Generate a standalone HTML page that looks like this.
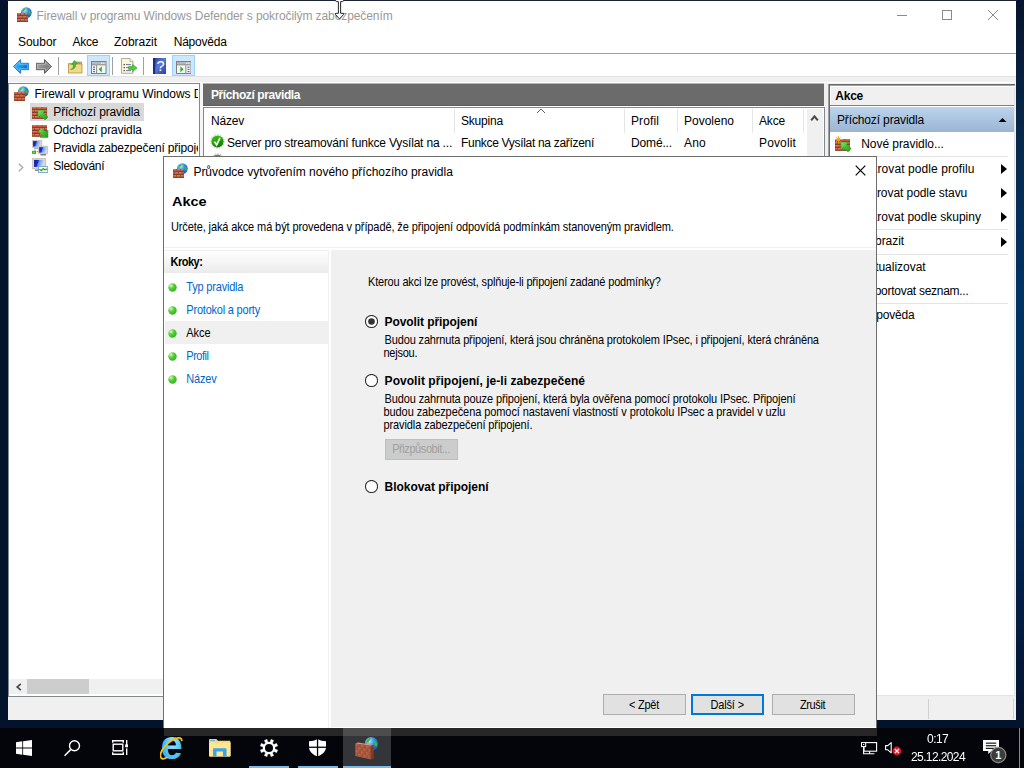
<!DOCTYPE html>
<html lang="cs"><head><meta charset="utf-8"><title>Firewall v programu Windows Defender s pokročilým zabezpečením</title>
<style>
html,body{margin:0;padding:0;}
body{width:1024px;height:768px;overflow:hidden;position:relative;background:#03122c;font-family:"Liberation Sans",sans-serif;}
.r{position:absolute;box-sizing:border-box;display:block;}
.t{position:absolute;white-space:nowrap;display:block;}
</style></head><body>
<div class="r" style="left:0px;top:0px;width:1024px;height:768px;background:#04132c;"></div>
<div class="r" style="left:1016px;top:0px;width:8px;height:728px;background:linear-gradient(to bottom,#06142e 0%,#072444 14%,#082a50 22%,#003366 41%,#013060 60%,#03204a 80%,#04142f 98%);"></div>
<div class="r" style="left:8px;top:1px;width:1008px;height:719px;background:#ffffff;"></div>
<div class="r" style="left:7px;top:0px;width:1010px;height:1px;background:#1b2433;"></div>
<span class="t" style="left:36.60px;top:10.24px;font-size:12px;line-height:12px;color:#999999;letter-spacing:-0.088px;">Firewall v programu Windows Defender s pokročilým zabezpečením</span>
<svg class="r" style="left:334px;top:0px;" width="12" height="20" viewBox="0 0 12 20"><path d="M1.6 -1H9.4V0.5Q9.4 1.6 8.4 1.6H6.6V13.3H8.9Q10.5 13.3 9.6 14.4L5.5 19L1.4 14.4Q0.5 13.3 2.1 13.3H4.4V1.6H2.6Q1.6 1.6 1.6 0.5Z" fill="#fff" stroke="#23232b" stroke-width="1"/></svg>
<div class="r" style="left:897px;top:15px;width:10px;height:1px;background:#8a8a8a;"></div>
<div class="r" style="left:942px;top:10px;width:10px;height:10px;border:1px solid #8a8a8a;"></div>
<svg class="r" style="left:988px;top:10px;" width="10" height="10" viewBox="0 0 10 10"><path d="M0 0L10 10M10 0L0 10" stroke="#8a8a8a" stroke-width="1" fill="none"/></svg>
<span class="t" style="left:18.00px;top:35.84px;font-size:12px;line-height:12px;color:#000;letter-spacing:-0.032px;">Soubor</span>
<span class="t" style="left:72.40px;top:35.84px;font-size:12px;line-height:12px;color:#000;letter-spacing:-0.219px;">Akce</span>
<span class="t" style="left:114.00px;top:35.84px;font-size:12px;line-height:12px;color:#000;letter-spacing:-0.043px;">Zobrazit</span>
<span class="t" style="left:173.70px;top:35.84px;font-size:12px;line-height:12px;color:#000;letter-spacing:-0.213px;">Nápověda</span>
<div class="r" style="left:8px;top:53px;width:1008px;height:1px;background:#a0a0a0;"></div>
<div class="r" style="left:8px;top:77px;width:1008px;height:7px;background:#f0f0f0;"></div>
<div class="r" style="left:8px;top:76px;width:1008px;height:1px;background:#e3e3e3;"></div>
<div class="r" style="left:87px;top:55px;width:23px;height:21px;background:#cce8ff;border:1px solid #99d1ff;"></div>
<div class="r" style="left:172px;top:55px;width:23px;height:21px;background:#cce8ff;border:1px solid #99d1ff;"></div>
<div class="r" style="left:58px;top:57px;width:1px;height:18px;background:#a0a0a0;"></div>
<div class="r" style="left:112px;top:57px;width:1px;height:18px;background:#a0a0a0;"></div>
<div class="r" style="left:143px;top:57px;width:1px;height:18px;background:#a0a0a0;"></div>
<div class="r" style="left:8px;top:84px;width:1008px;height:636px;background:#f0f0f0;"></div>
<div class="r" style="left:8px;top:83px;width:192px;height:614px;background:#ffffff;border:1px solid #828790;"></div>
<div class="r" style="left:8px;top:82px;width:1008px;height:1px;background:#ffffff;"></div>
<div class="r" style="left:30px;top:103px;width:114px;height:18px;background:#d9d9d9;"></div>
<span class="t" style="left:34.40px;top:87.84px;font-size:12px;line-height:12px;color:#000;letter-spacing:-0.047px;width:163.5px;overflow:hidden;">Firewall v programu Windows Defender</span>
<span class="t" style="left:53.30px;top:105.84px;font-size:12px;line-height:12px;color:#000;letter-spacing:-0.169px;">Příchozí pravidla</span>
<span class="t" style="left:53.30px;top:123.84px;font-size:12px;line-height:12px;color:#000;letter-spacing:-0.096px;">Odchozí pravidla</span>
<span class="t" style="left:53.30px;top:141.84px;font-size:12px;line-height:12px;color:#000;letter-spacing:-0.175px;width:144.5px;overflow:hidden;">Pravidla zabezpečení připojení</span>
<span class="t" style="left:53.30px;top:159.84px;font-size:12px;line-height:12px;color:#000;letter-spacing:-0.263px;">Sledování</span>
<div class="r" style="left:9px;top:679px;width:190px;height:15px;background:#f0f0f0;"></div>
<div class="r" style="left:27px;top:679px;width:62px;height:15px;background:#cdcdcd;"></div>
<svg class="r" style="left:14.5px;top:682.5px;" width="7" height="8" viewBox="0 0 7 8"><path d="M5.8 0.8L2.2 4L5.8 7.2" stroke="#505050" stroke-width="1.8" fill="none"/></svg>
<div class="r" style="left:200px;top:83px;width:4px;height:614px;background:#f6f6f6;"></div>
<div class="r" style="left:203px;top:83px;width:621px;height:1px;background:#b4b4b4;"></div>
<div class="r" style="left:203px;top:84px;width:621px;height:22px;background:#6b6b6b;"></div>
<div class="r" style="left:203px;top:105px;width:621px;height:1px;background:#5e5e5e;"></div>
<div class="r" style="left:203px;top:106px;width:621px;height:1px;background:#ffffff;"></div>
<span class="t" style="left:211.00px;top:88.84px;font-size:12px;line-height:12px;color:#ffffff;letter-spacing:-0.413px;font-weight:bold;">Příchozí pravidla</span>
<div class="r" style="left:203px;top:107px;width:622px;height:590px;background:#ffffff;border:1px solid #828790;"></div>
<div class="r" style="left:807px;top:109px;width:16px;height:587px;background:#f0f0f0;"></div>
<div class="r" style="left:803px;top:109px;width:1px;height:24px;background:#e5e5e5;"></div>
<div class="r" style="left:454px;top:109px;width:1px;height:24px;background:#e5e5e5;"></div>
<div class="r" style="left:624px;top:109px;width:1px;height:24px;background:#e5e5e5;"></div>
<div class="r" style="left:677px;top:109px;width:1px;height:24px;background:#e5e5e5;"></div>
<div class="r" style="left:752px;top:109px;width:1px;height:24px;background:#e5e5e5;"></div>
<span class="t" style="left:211.00px;top:114.84px;font-size:12px;line-height:12px;color:#000;letter-spacing:-0.203px;">Název</span>
<span class="t" style="left:461.00px;top:114.84px;font-size:12px;line-height:12px;color:#000;letter-spacing:-0.195px;">Skupina</span>
<span class="t" style="left:631.00px;top:114.84px;font-size:12px;line-height:12px;color:#000;letter-spacing:0.110px;">Profil</span>
<span class="t" style="left:684.00px;top:114.84px;font-size:12px;line-height:12px;color:#000;letter-spacing:-0.005px;">Povoleno</span>
<span class="t" style="left:759.00px;top:114.84px;font-size:12px;line-height:12px;color:#000;letter-spacing:-0.169px;">Akce</span>
<span class="t" style="left:227.00px;top:136.84px;font-size:12px;line-height:12px;color:#000;letter-spacing:-0.181px;">Server pro streamování funkce Vysílat na ...</span>
<span class="t" style="left:461.00px;top:136.84px;font-size:12px;line-height:12px;color:#000;letter-spacing:-0.306px;">Funkce Vysílat na zařízení</span>
<span class="t" style="left:631.00px;top:136.84px;font-size:12px;line-height:12px;color:#000;letter-spacing:-0.144px;">Domé...</span>
<span class="t" style="left:684.00px;top:136.84px;font-size:12px;line-height:12px;color:#000;letter-spacing:0.216px;">Ano</span>
<span class="t" style="left:759.00px;top:136.84px;font-size:12px;line-height:12px;color:#000;letter-spacing:0.140px;">Povolit</span>
<svg class="r" style="left:536px;top:108px;" width="10" height="6" viewBox="0 0 10 6"><path d="M1 5L5 1L9 5" stroke="#606060" stroke-width="1" fill="none"/></svg>
<svg class="r" style="left:810px;top:114px;" width="9" height="8" viewBox="0 0 9 8"><path d="M1.2 6.4L4.5 2.3L7.8 6.4" stroke="#4a4a4a" stroke-width="2.1" fill="none"/></svg>
<div class="r" style="left:828px;top:84px;width:187px;height:612px;background:#ffffff;border-left:2px solid #a0a0a0;border-top:2px solid #a0a0a0;"></div>
<div class="r" style="left:829px;top:84px;width:186px;height:1px;background:#696969;"></div>
<div class="r" style="left:829px;top:84px;width:1px;height:612px;background:#696969;"></div>
<div class="r" style="left:830px;top:86px;width:185px;height:1px;background:#ffffff;"></div>
<div class="r" style="left:831px;top:87px;width:184px;height:18px;background:#f0f0f0;"></div>
<span class="t" style="left:835.30px;top:89.84px;font-size:12px;line-height:12px;color:#000;letter-spacing:-0.246px;font-weight:bold;">Akce</span>
<div class="r" style="left:830px;top:105px;width:185px;height:1px;background:#808080;"></div>
<div class="r" style="left:830px;top:106px;width:185px;height:1px;background:#ffffff;"></div>
<div class="r" style="left:830px;top:107px;width:185px;height:25px;background:linear-gradient(#bcd4ec,#9ab5d3);"></div>
<span class="t" style="left:837.00px;top:113.84px;font-size:12px;line-height:12px;color:#000;letter-spacing:-0.139px;">Příchozí pravidla</span>
<svg class="r" style="left:998px;top:117.6px;" width="9" height="4.6" viewBox="0 0 9 4.6"><path d="M0 4.6L4.5 0L9 4.6Z" fill="#000"/></svg>
<span class="t" style="left:861.20px;top:137.84px;font-size:12px;line-height:12px;color:#000;letter-spacing:-0.048px;">Nové pravidlo...</span>
<div class="r" style="left:834px;top:156px;width:174px;height:1px;background:#e3e3e3;"></div>
<span class="t" style="left:861.20px;top:162.84px;font-size:12px;line-height:12px;color:#000;letter-spacing:0.084px;">Filtrovat podle profilu</span>
<span class="t" style="left:861.20px;top:186.84px;font-size:12px;line-height:12px;color:#000;letter-spacing:-0.066px;">Filtrovat podle stavu</span>
<span class="t" style="left:861.20px;top:210.84px;font-size:12px;line-height:12px;color:#000;letter-spacing:0.018px;">Filtrovat podle skupiny</span>
<div class="r" style="left:834px;top:229px;width:174px;height:1px;background:#e3e3e3;"></div>
<span class="t" style="left:861.20px;top:235.24px;font-size:12px;line-height:12px;color:#000;letter-spacing:-0.068px;">Zobrazit</span>
<div class="r" style="left:834px;top:254px;width:174px;height:1px;background:#e3e3e3;"></div>
<span class="t" style="left:861.20px;top:260.84px;font-size:12px;line-height:12px;color:#000;letter-spacing:-0.025px;">Aktualizovat</span>
<span class="t" style="left:861.20px;top:285.34px;font-size:12px;line-height:12px;color:#000;letter-spacing:-0.271px;">Exportovat seznam...</span>
<div class="r" style="left:834px;top:303px;width:174px;height:1px;background:#e3e3e3;"></div>
<span class="t" style="left:861.20px;top:309.44px;font-size:12px;line-height:12px;color:#000;letter-spacing:-0.163px;">Nápověda</span>
<svg class="r" style="left:1001px;top:164px;" width="6" height="10" viewBox="0 0 6 10"><path d="M0 0L6 5L0 10Z" fill="#000"/></svg>
<svg class="r" style="left:1001px;top:188px;" width="6" height="10" viewBox="0 0 6 10"><path d="M0 0L6 5L0 10Z" fill="#000"/></svg>
<svg class="r" style="left:1001px;top:212px;" width="6" height="10" viewBox="0 0 6 10"><path d="M0 0L6 5L0 10Z" fill="#000"/></svg>
<svg class="r" style="left:1001px;top:236.5px;" width="6" height="10" viewBox="0 0 6 10"><path d="M0 0L6 5L0 10Z" fill="#000"/></svg>
<div class="r" style="left:1014px;top:87px;width:1px;height:609px;background:#e3e3e3;"></div>
<div class="r" style="left:830px;top:695px;width:185px;height:1px;background:#e3e3e3;"></div>
<div class="r" style="left:8px;top:697px;width:1008px;height:23px;background:#f0f0f0;"></div>
<div class="r" style="left:928px;top:699px;width:1px;height:20px;background:#d0d0d0;"></div>
<div class="r" style="left:1013px;top:699px;width:1px;height:20px;background:#d0d0d0;"></div>
<svg class="r" style="left:17px;top:7px;" width="16" height="16" viewBox="0 0 16 16"><defs><radialGradient id="i1" cx="35%" cy="30%" r="80%"><stop offset="0" stop-color="#bfe6ff"/><stop offset="0.45" stop-color="#2f8fe8"/><stop offset="1" stop-color="#1450b0"/></radialGradient></defs><circle cx="9.3" cy="5.6" r="5.4" fill="url(#i1)"/><path d="M5.25 4.25 q0.54 -2.97 3.24 -3.51 q0.27 1.89 -1.08 2.7 q-0.54 1.62 -2.16 0.81z" fill="#3cc028"/><path d="M11.73 2.9 q2.7 1.62 1.89 4.86 q-2.7 -1.08 -1.89 -4.86z" fill="#3cc028"/><defs><linearGradient id="i2" x1="0" y1="0" x2="0" y2="1"><stop offset="0" stop-color="#f09a78"/><stop offset="0.35" stop-color="#d9623d"/><stop offset="0.8" stop-color="#b8482a"/><stop offset="1" stop-color="#8a3018"/></linearGradient></defs><rect x="0" y="6" width="11" height="9" fill="#7c4438"/><rect x="0.30" y="6.25" width="3.07" height="2.50" fill="url(#i2)"/><rect x="3.97" y="6.25" width="3.07" height="2.50" fill="url(#i2)"/><rect x="7.64" y="6.25" width="3.06" height="2.50" fill="url(#i2)"/><rect x="0.30" y="9.25" width="1.23" height="2.50" fill="url(#i2)"/><rect x="2.13" y="9.25" width="3.07" height="2.50" fill="url(#i2)"/><rect x="5.80" y="9.25" width="3.07" height="2.50" fill="url(#i2)"/><rect x="9.48" y="9.25" width="1.22" height="2.50" fill="url(#i2)"/><rect x="0.30" y="12.25" width="3.07" height="2.50" fill="url(#i2)"/><rect x="3.97" y="12.25" width="3.07" height="2.50" fill="url(#i2)"/><rect x="7.64" y="12.25" width="3.06" height="2.50" fill="url(#i2)"/></svg>
<svg class="r" style="left:14px;top:86px;" width="16" height="16" viewBox="0 0 16 16"><defs><radialGradient id="i3" cx="35%" cy="30%" r="80%"><stop offset="0" stop-color="#bfe6ff"/><stop offset="0.45" stop-color="#2f8fe8"/><stop offset="1" stop-color="#1450b0"/></radialGradient></defs><circle cx="9.3" cy="5.6" r="5.4" fill="url(#i3)"/><path d="M5.25 4.25 q0.54 -2.97 3.24 -3.51 q0.27 1.89 -1.08 2.7 q-0.54 1.62 -2.16 0.81z" fill="#3cc028"/><path d="M11.73 2.9 q2.7 1.62 1.89 4.86 q-2.7 -1.08 -1.89 -4.86z" fill="#3cc028"/><defs><linearGradient id="i4" x1="0" y1="0" x2="0" y2="1"><stop offset="0" stop-color="#f09a78"/><stop offset="0.35" stop-color="#d9623d"/><stop offset="0.8" stop-color="#b8482a"/><stop offset="1" stop-color="#8a3018"/></linearGradient></defs><rect x="0" y="6" width="11" height="9" fill="#7c4438"/><rect x="0.30" y="6.25" width="3.07" height="2.50" fill="url(#i4)"/><rect x="3.97" y="6.25" width="3.07" height="2.50" fill="url(#i4)"/><rect x="7.64" y="6.25" width="3.06" height="2.50" fill="url(#i4)"/><rect x="0.30" y="9.25" width="1.23" height="2.50" fill="url(#i4)"/><rect x="2.13" y="9.25" width="3.07" height="2.50" fill="url(#i4)"/><rect x="5.80" y="9.25" width="3.07" height="2.50" fill="url(#i4)"/><rect x="9.48" y="9.25" width="1.22" height="2.50" fill="url(#i4)"/><rect x="0.30" y="12.25" width="3.07" height="2.50" fill="url(#i4)"/><rect x="3.97" y="12.25" width="3.07" height="2.50" fill="url(#i4)"/><rect x="7.64" y="12.25" width="3.06" height="2.50" fill="url(#i4)"/></svg>
<svg class="r" style="left:32px;top:107px;" width="17" height="14" viewBox="0 0 17 14"><defs><linearGradient id="i5" x1="0" y1="0" x2="0" y2="1"><stop offset="0" stop-color="#f09a78"/><stop offset="0.35" stop-color="#d9623d"/><stop offset="0.8" stop-color="#b8482a"/><stop offset="1" stop-color="#8a3018"/></linearGradient></defs><rect x="0" y="0" width="15.1" height="11.8" fill="#7c4438"/><rect x="0.30" y="0.25" width="4.40" height="2.45" fill="url(#i5)"/><rect x="5.30" y="0.25" width="4.40" height="2.45" fill="url(#i5)"/><rect x="10.30" y="0.25" width="4.40" height="2.45" fill="url(#i5)"/><rect x="0.30" y="3.20" width="1.90" height="2.45" fill="url(#i5)"/><rect x="2.80" y="3.20" width="4.40" height="2.45" fill="url(#i5)"/><rect x="7.80" y="3.20" width="4.40" height="2.45" fill="url(#i5)"/><rect x="12.80" y="3.20" width="2.00" height="2.45" fill="url(#i5)"/><rect x="0.30" y="6.15" width="4.40" height="2.45" fill="url(#i5)"/><rect x="5.30" y="6.15" width="4.40" height="2.45" fill="url(#i5)"/><rect x="10.30" y="6.15" width="4.40" height="2.45" fill="url(#i5)"/><rect x="0.30" y="9.10" width="1.90" height="2.45" fill="url(#i5)"/><rect x="2.80" y="9.10" width="4.40" height="2.45" fill="url(#i5)"/><rect x="7.80" y="9.10" width="4.40" height="2.45" fill="url(#i5)"/><rect x="12.80" y="9.10" width="2.00" height="2.45" fill="url(#i5)"/><defs><linearGradient id="i6" x1="0" y1="0" x2="1" y2="1"><stop offset="0" stop-color="#8be870"/><stop offset="0.5" stop-color="#3fc02f"/><stop offset="1" stop-color="#1f9a1a"/></linearGradient></defs><path d="M6 3.2L13.5 3.3L11.2 5.6L16 10L13 13L8.4 8.4L6 10.8Z" fill="url(#i6)" stroke="#2aa020" stroke-width="0.5" stroke-linejoin="round"/></svg>
<svg class="r" style="left:32px;top:125px;" width="17" height="14" viewBox="0 0 17 14"><defs><linearGradient id="i7" x1="0" y1="0" x2="0" y2="1"><stop offset="0" stop-color="#f09a78"/><stop offset="0.35" stop-color="#d9623d"/><stop offset="0.8" stop-color="#b8482a"/><stop offset="1" stop-color="#8a3018"/></linearGradient></defs><rect x="0" y="0" width="15" height="11.7" fill="#7c4438"/><rect x="0.30" y="0.25" width="4.40" height="2.42" fill="url(#i7)"/><rect x="5.30" y="0.25" width="4.40" height="2.42" fill="url(#i7)"/><rect x="10.30" y="0.25" width="4.40" height="2.42" fill="url(#i7)"/><rect x="0.30" y="3.17" width="1.90" height="2.42" fill="url(#i7)"/><rect x="2.80" y="3.17" width="4.40" height="2.42" fill="url(#i7)"/><rect x="7.80" y="3.17" width="4.40" height="2.42" fill="url(#i7)"/><rect x="12.80" y="3.17" width="1.90" height="2.42" fill="url(#i7)"/><rect x="0.30" y="6.10" width="4.40" height="2.42" fill="url(#i7)"/><rect x="5.30" y="6.10" width="4.40" height="2.42" fill="url(#i7)"/><rect x="10.30" y="6.10" width="4.40" height="2.42" fill="url(#i7)"/><rect x="0.30" y="9.02" width="1.90" height="2.42" fill="url(#i7)"/><rect x="2.80" y="9.02" width="4.40" height="2.42" fill="url(#i7)"/><rect x="7.80" y="9.02" width="4.40" height="2.42" fill="url(#i7)"/><rect x="12.80" y="9.02" width="1.90" height="2.42" fill="url(#i7)"/><defs><linearGradient id="i8" x1="0" y1="0" x2="1" y2="1"><stop offset="0" stop-color="#8be870"/><stop offset="0.5" stop-color="#3fc02f"/><stop offset="1" stop-color="#1f9a1a"/></linearGradient></defs><path d="M16 12.6V5L13.8 7.2L9.6 3L6.2 6.4L10.4 10.6L8.2 12.6Z" fill="url(#i8)" stroke="#2aa020" stroke-width="0.5" stroke-linejoin="round"/></svg>
<svg class="r" style="left:32px;top:140px;" width="16.2" height="16" viewBox="0 0 16.2 16"><defs><linearGradient id="i9" x1="0" y1="0" x2="1" y2="0.25"><stop offset="0" stop-color="#0a14a8"/><stop offset="0.42" stop-color="#1430d0"/><stop offset="0.55" stop-color="#6a98f0"/><stop offset="1" stop-color="#c4dcff"/></linearGradient></defs><rect x="0.1" y="0.1" width="9.7" height="7.5" rx="0.6" fill="#dcd8c8" stroke="#a8a498" stroke-width="0.5"/><rect x="1.1" y="1.1" width="7.7" height="5.5" fill="url(#i9)"/><path d="M2 8.4H6M3 9.6V11.6M4.5 11.6H6.5" stroke="#8a8a8a" stroke-width="0.8" fill="none"/><defs><linearGradient id="i10" x1="0" y1="0" x2="1" y2="0.25"><stop offset="0" stop-color="#0a14a8"/><stop offset="0.42" stop-color="#1430d0"/><stop offset="0.55" stop-color="#6a98f0"/><stop offset="1" stop-color="#c4dcff"/></linearGradient></defs><rect x="6.2" y="6.2" width="9.7" height="7.5" rx="0.6" fill="#dcd8c8" stroke="#a8a498" stroke-width="0.5"/><rect x="7.2" y="7.2" width="7.7" height="5.5" fill="url(#i10)"/><path d="M8.4 14.8H14" stroke="#6a6a6a" stroke-width="1.3"/><rect x="0.1" y="10.8" width="3.9" height="3.1" fill="#1fae12"/><rect x="1" y="11.6" width="2.1" height="1.3" fill="#7ae060"/></svg>
<svg class="r" style="left:32px;top:158px;" width="16.2" height="15" viewBox="0 0 16.2 15"><defs><linearGradient id="i11" x1="0" y1="0" x2="1" y2="0.25"><stop offset="0" stop-color="#0a14a8"/><stop offset="0.42" stop-color="#1430d0"/><stop offset="0.55" stop-color="#6a98f0"/><stop offset="1" stop-color="#c4dcff"/></linearGradient></defs><rect x="0.2" y="0" width="13.6" height="10.9" rx="0.6" fill="#dcd8c8" stroke="#a8a498" stroke-width="0.5"/><rect x="2.1" y="1.9" width="9.8" height="7.1" fill="url(#i11)"/><path d="M3 12.2H8" stroke="#8a8a8a" stroke-width="1.5"/><rect x="6.5" y="8.6" width="9.2" height="5.9" fill="#fff" stroke="#7c9ccc" stroke-width="0.9"/><path d="M7.3 11.2L9.4 12.6L11.2 10.6L13 11.8L15 10.8" stroke="#2aa81c" stroke-width="1.3" fill="none"/></svg>
<svg class="r" style="left:18px;top:162.6px;" width="6" height="9" viewBox="0 0 6 9"><path d="M0.8 0.7L4.8 4.5L0.8 8.3" stroke="#a6a6a6" stroke-width="1.2" fill="none"/></svg>
<svg class="r" style="left:835px;top:136px;" width="17" height="17" viewBox="0 0 17 17"><defs><linearGradient id="i12" x1="0" y1="0" x2="0" y2="1"><stop offset="0" stop-color="#f09a78"/><stop offset="0.35" stop-color="#d9623d"/><stop offset="0.8" stop-color="#b8482a"/><stop offset="1" stop-color="#8a3018"/></linearGradient></defs><rect x="0" y="3" width="15" height="11.8" fill="#7c4438"/><rect x="0.30" y="3.25" width="4.40" height="2.45" fill="url(#i12)"/><rect x="5.30" y="3.25" width="4.40" height="2.45" fill="url(#i12)"/><rect x="10.30" y="3.25" width="4.40" height="2.45" fill="url(#i12)"/><rect x="0.30" y="6.20" width="1.90" height="2.45" fill="url(#i12)"/><rect x="2.80" y="6.20" width="4.40" height="2.45" fill="url(#i12)"/><rect x="7.80" y="6.20" width="4.40" height="2.45" fill="url(#i12)"/><rect x="12.80" y="6.20" width="1.90" height="2.45" fill="url(#i12)"/><rect x="0.30" y="9.15" width="4.40" height="2.45" fill="url(#i12)"/><rect x="5.30" y="9.15" width="4.40" height="2.45" fill="url(#i12)"/><rect x="10.30" y="9.15" width="4.40" height="2.45" fill="url(#i12)"/><rect x="0.30" y="12.10" width="1.90" height="2.45" fill="url(#i12)"/><rect x="2.80" y="12.10" width="4.40" height="2.45" fill="url(#i12)"/><rect x="7.80" y="12.10" width="4.40" height="2.45" fill="url(#i12)"/><rect x="12.80" y="12.10" width="1.90" height="2.45" fill="url(#i12)"/><defs><linearGradient id="i13" x1="0" y1="0" x2="1" y2="1"><stop offset="0" stop-color="#8be870"/><stop offset="0.5" stop-color="#3fc02f"/><stop offset="1" stop-color="#1f9a1a"/></linearGradient></defs><path d="M5.9 6L14 6.2L11.7 8.4L16.2 12.6L13 16L8.4 11.4L5.9 13.8Z" fill="url(#i13)" stroke="#2aa020" stroke-width="0.5" stroke-linejoin="round"/><circle cx="3.4" cy="3.5" r="1.8" fill="#ffb81a"/><path d="M3.4 3.5L6.80 3.50" stroke="#f0a010" stroke-width="0.9" stroke-linecap="round"/><path d="M3.4 3.5L5.45 5.55" stroke="#f0a010" stroke-width="0.9" stroke-linecap="round"/><path d="M3.4 3.5L3.40 6.90" stroke="#f0a010" stroke-width="0.9" stroke-linecap="round"/><path d="M3.4 3.5L1.35 5.55" stroke="#f0a010" stroke-width="0.9" stroke-linecap="round"/><path d="M3.4 3.5L0.00 3.50" stroke="#f0a010" stroke-width="0.9" stroke-linecap="round"/><path d="M3.4 3.5L1.35 1.45" stroke="#f0a010" stroke-width="0.9" stroke-linecap="round"/><path d="M3.4 3.5L3.40 0.10" stroke="#f0a010" stroke-width="0.9" stroke-linecap="round"/><path d="M3.4 3.5L5.45 1.45" stroke="#f0a010" stroke-width="0.9" stroke-linecap="round"/></svg>
<svg class="r" style="left:209.5px;top:134.4px;" width="15" height="15" viewBox="0 0 15 15"><defs><linearGradient id="i14" x1="0" y1="0" x2="0.4" y2="1"><stop offset="0" stop-color="#3cc812"/><stop offset="0.5" stop-color="#28a808"/><stop offset="1" stop-color="#157a0c"/></linearGradient></defs><circle cx="7.5" cy="7.5" r="6.7" fill="none" stroke="#b8a8b8" stroke-width="0.9" stroke-dasharray="1.3 1.3"/><circle cx="7.5" cy="7.5" r="6.1" fill="url(#i14)"/><path d="M4.4 7.6L6.6 10.9L10 3.9" stroke="#fff" stroke-width="1.7" fill="none" stroke-linejoin="miter"/></svg>
<svg class="r" style="left:209.5px;top:153px;" width="15" height="15" viewBox="0 0 15 15"><defs><linearGradient id="i15" x1="0" y1="0" x2="0.4" y2="1"><stop offset="0" stop-color="#3cc812"/><stop offset="0.5" stop-color="#28a808"/><stop offset="1" stop-color="#157a0c"/></linearGradient></defs><circle cx="7.5" cy="7.5" r="6.7" fill="none" stroke="#b8a8b8" stroke-width="0.9" stroke-dasharray="1.3 1.3"/><circle cx="7.5" cy="7.5" r="6.1" fill="url(#i15)"/><path d="M4.4 7.6L6.6 10.9L10 3.9" stroke="#fff" stroke-width="1.7" fill="none" stroke-linejoin="miter"/></svg>
<svg class="r" style="left:13px;top:59px;" width="16" height="15" viewBox="0 0 16 14.6"><defs><linearGradient id="i16" x1="0" y1="0" x2="1" y2="0.6"><stop offset="0" stop-color="#4cc4ff"/><stop offset="0.5" stop-color="#22a0f0"/><stop offset="1" stop-color="#0060c8"/></linearGradient></defs><path d="M0.5 7.3L7.5 0.4V4.1H15.6V10.5H7.5V14.2Z" fill="url(#i16)" stroke="#2a7fd0" stroke-width="1" stroke-linejoin="miter"/><path d="M2 7.3L6.5 2.8V5.1H14.6V9.5H6.5V11.8Z" fill="none" stroke="#8ad8ff" stroke-width="0.8" opacity="0.75"/></svg>
<svg class="r" style="left:36px;top:59px;" width="16" height="15" viewBox="0 0 16 14.6"><defs><linearGradient id="i17" x1="0" y1="0" x2="1" y2="0.6"><stop offset="0" stop-color="#b8b8b8"/><stop offset="0.5" stop-color="#8e8e8e"/><stop offset="1" stop-color="#7a7a7a"/></linearGradient></defs><path d="M15.5 7.3L8.5 0.4V4.1H0.4V10.5H8.5V14.2Z" fill="url(#i17)" stroke="#5e5e5e" stroke-width="1" stroke-linejoin="miter"/><path d="M14 7.3L9.5 2.8V5.1H1.4V9.5H9.5V11.8Z" fill="none" stroke="#c8c8c8" stroke-width="0.8" opacity="0.75"/></svg>
<svg class="r" style="left:68px;top:60px;" width="15" height="14" viewBox="0 0 15 14"><path d="M0.5 3.5H5L6.5 2H13.5V4" fill="#e9c86e" stroke="#b8903a" stroke-width="0.8"/><rect x="0.5" y="4" width="13.5" height="9" fill="#f2d98a" stroke="#b8903a" stroke-width="0.8"/><rect x="9.5" y="2.6" width="3" height="1" fill="#4b8fe0"/><path d="M2.5 9.5C5 9 5.6 7 5.4 4.2L3.6 4.6L6.4 0.4L9.4 3.4L7.6 3.8C8 7 6.4 9.6 2.5 9.5Z" fill="#3fbf2f" stroke="#1f8f17" stroke-width="0.5"/></svg>
<svg class="r" style="left:91.3px;top:61px;" width="15.5" height="13" viewBox="0 0 15.5 13"><rect x="0.5" y="0.5" width="14.5" height="12" fill="#f4f4f4" stroke="#808080" stroke-width="1"/><rect x="1" y="1" width="13.5" height="2.6" fill="#b8b8b8"/><rect x="1" y="3.4" width="13.5" height="0.9" fill="#808080"/><rect x="10.2" y="1.6" width="1.2" height="1.2" fill="#fff"/><rect x="12.2" y="1.6" width="1.2" height="1.2" fill="#fff"/><rect x="5.2" y="4.3" width="0.9" height="8" fill="#808080"/><rect x="2" y="5.6" width="2" height="1.2" fill="#3b78d8"/><rect x="2" y="7.8" width="2" height="1.2" fill="#3b78d8"/><rect x="2" y="10" width="2" height="1.2" fill="#3b78d8"/><path d="M10.8 5.4V11.2L7.6 8.3Z" fill="#2fae22"/></svg>
<svg class="r" style="left:121px;top:58px;" width="16.5" height="16" viewBox="0 0 16.5 16"><path d="M0.5 0.5H9L12 3.5V15.3H0.5Z" fill="#fbf6d8" stroke="#9a9a8a" stroke-width="0.8"/><path d="M9 0.5V3.5H12" fill="#fff" stroke="#9a9a8a" stroke-width="0.7"/><rect x="2.6" y="6" width="1.2" height="1.2" fill="#303030"/><rect x="5" y="6.1" width="5" height="1" fill="#7a70b8"/><rect x="2.6" y="9" width="1.2" height="1.2" fill="#303030"/><rect x="5" y="9.1" width="5" height="1" fill="#7a70b8"/><rect x="2.6" y="12" width="1.2" height="1.2" fill="#303030"/><rect x="5" y="12.1" width="5" height="1" fill="#7a70b8"/><path d="M7.6 8.6H11.6V6.4L16 10L11.6 13.6V11.4H7.6Z" fill="#4fcf3a" stroke="#2a9a20" stroke-width="0.6"/></svg>
<svg class="r" style="left:153px;top:58px;" width="13" height="16" viewBox="0 0 13 16"><defs><linearGradient id="i18" x1="0" y1="0" x2="1" y2="1"><stop offset="0" stop-color="#2038a0"/><stop offset="0.45" stop-color="#5878d0"/><stop offset="1" stop-color="#2840a8"/></linearGradient></defs><rect x="0" y="0" width="13" height="16" fill="url(#i18)"/><rect x="0" y="0" width="2.2" height="16" fill="#182c8c"/><text x="7.6" y="12.8" font-family="Liberation Sans, sans-serif" font-size="14.5" fill="#fff" text-anchor="middle">?</text></svg>
<svg class="r" style="left:175.8px;top:61px;" width="15.5" height="13" viewBox="0 0 15.5 13"><rect x="0.5" y="0.5" width="14.5" height="12" fill="#f4f4f4" stroke="#808080" stroke-width="1"/><rect x="1" y="1" width="13.5" height="2.6" fill="#b8b8b8"/><rect x="1" y="3.4" width="13.5" height="0.9" fill="#808080"/><rect x="10.2" y="1.6" width="1.2" height="1.2" fill="#fff"/><rect x="12.2" y="1.6" width="1.2" height="1.2" fill="#fff"/><rect x="9.4" y="4.3" width="0.9" height="8" fill="#808080"/><rect x="11.5" y="5.6" width="2" height="1.2" fill="#3b78d8"/><rect x="11.5" y="7.8" width="2" height="1.2" fill="#3b78d8"/><rect x="11.5" y="10" width="2" height="1.2" fill="#3b78d8"/><path d="M4.4 5.4V11.2L7.6 8.3Z" fill="#2fae22"/></svg>
<div class="r" style="left:0px;top:728px;width:1024px;height:40px;background:#03050a;"></div>
<div class="r" style="left:164px;top:728px;width:713px;height:8px;background:#272727;"></div>
<div class="r" style="left:343px;top:728px;width:48px;height:8px;background:#4d4d4d;"></div>
<div class="r" style="left:343px;top:736px;width:48px;height:30px;background:#333538;"></div>
<div class="r" style="left:249px;top:766px;width:40px;height:2px;background:#76b9ed;"></div>
<div class="r" style="left:298px;top:766px;width:40px;height:2px;background:#76b9ed;"></div>
<div class="r" style="left:343px;top:766px;width:48px;height:2px;background:#76b9ed;"></div>
<span class="t" style="left:927.00px;top:732.84px;font-size:12px;line-height:12px;color:#ffffff;letter-spacing:-0.538px;will-change:transform;">0:17</span>
<span class="t" style="left:911.20px;top:750.74px;font-size:12px;line-height:12px;color:#ffffff;letter-spacing:-0.605px;will-change:transform;">25.12.2024</span>
<div class="r" style="left:1019px;top:728px;width:1px;height:40px;background:#8a8a8a;"></div>
<svg class="r" style="left:16px;top:740px;" width="16" height="16" viewBox="0 0 16 16"><path d="M0 2.2L6.3 1.3V7.6H0Z M7.1 1.2L16 0V7.6H7.1Z M0 8.4H6.3V14.7L0 13.8Z M7.1 8.4H16V16L7.1 14.8Z" fill="#fff"/></svg>
<svg class="r" style="left:63.5px;top:740px;" width="17" height="17" viewBox="0 0 17 17"><circle cx="10.5" cy="5.8" r="5" fill="none" stroke="#fff" stroke-width="1.4"/><path d="M6.9 9.4L0.6 15.8" stroke="#fff" stroke-width="1.5" fill="none"/></svg>
<svg class="r" style="left:111.5px;top:740px;" width="16.4" height="15" viewBox="0 0 16.4 15"><rect x="1.2" y="4.2" width="9.6" height="6.6" fill="none" stroke="#fff" stroke-width="1.4"/><path d="M0.7 2.8V0.7H11.3V2.8M0.7 12.2V14.3H11.3V12.2" fill="none" stroke="#fff" stroke-width="1.4"/><rect x="14" y="0" width="1.4" height="15" fill="#fff"/><rect x="13.2" y="4.4" width="3" height="3" fill="#fff"/><rect x="13.2" y="7.4" width="3" height="1" fill="#03050a"/></svg>
<svg class="r" style="left:160px;top:736px;" width="24" height="25" viewBox="0 0 24 25"><defs><radialGradient id="i19" cx="55%" cy="45%" r="65%"><stop offset="0" stop-color="#9aeaff"/><stop offset="0.55" stop-color="#4cc0f4"/><stop offset="1" stop-color="#1e8fe0"/></radialGradient></defs><text x="0.6" y="22.6" font-family="Liberation Sans, sans-serif" font-weight="bold" font-size="40" fill="url(#i19)" textLength="21.6">e</text><path d="M6.8 21.6C3.6 23.6 0.6 23.2 0.4 20C0.2 15 6 7.5 13 3.6C17.6 1 21.6 1.2 21.8 4.4" fill="none" stroke="#f5bd10" stroke-width="1.8" stroke-linecap="round"/></svg>
<svg class="r" style="left:209px;top:739px;" width="21.5" height="17.5" viewBox="0 0 21.5 17.5"><path d="M0 1.2C0 0.5 0.5 0 1.2 0H7.2L9 1.8H20.4C21 1.8 21.5 2.3 21.5 2.9V16.4C21.5 17 21 17.5 20.4 17.5H1.2C0.5 17.5 0 17 0 16.4Z" fill="#f7d674"/><rect x="0" y="3.4" width="21.5" height="14.1" rx="0.8" fill="#ffe594"/><rect x="1.4" y="0.9" width="4.6" height="1" fill="#4fb0f0"/><path d="M4 17.5V10.2C4 9.6 4.5 9.2 5 9.2H16.5C17 9.2 17.5 9.6 17.5 10.2V17.5H14V12.6H7.5V17.5Z" fill="#38a4ea"/></svg>
<svg class="r" style="left:260px;top:739px;" width="18" height="18" viewBox="0 0 18 18"><path d="M15.00 10.08 L17.78 10.99 L16.61 13.80 L14.01 12.48 L12.48 14.01 L13.80 16.61 L10.99 17.78 L10.08 15.00 L7.92 15.00 L7.01 17.78 L4.20 16.61 L5.52 14.01 L3.99 12.48 L1.39 13.80 L0.22 10.99 L3.00 10.08 L3.00 7.92 L0.22 7.01 L1.39 4.20 L3.99 5.52 L5.52 3.99 L4.20 1.39 L7.01 0.22 L7.92 3.00 L10.08 3.00 L10.99 0.22 L13.80 1.39 L12.48 3.99 L14.01 5.52 L16.61 4.20 L17.78 7.01 L15.00 7.92Z" fill="#fff" stroke="#fff" stroke-width="0.3" stroke-linejoin="round"/><circle cx="9" cy="9" r="4" fill="#03050a"/></svg>
<svg class="r" style="left:309.3px;top:738.8px;" width="17" height="17.5" viewBox="0 0 17 17.5"><path d="M8.5 0C6 1.6 3 2.2 0 2.2V8C0 12.4 3.4 15.6 8.5 17.5C13.6 15.6 17 12.4 17 8V2.2C14 2.2 11 1.6 8.5 0Z" fill="#fff"/><rect x="7.9" y="0" width="1.3" height="17.5" fill="#03050a"/><rect x="0" y="7.6" width="17" height="1.3" fill="#03050a"/></svg>
<svg class="r" style="left:355.3px;top:736.5px;" width="23.5" height="23" viewBox="0 0 23.5 23"><defs><radialGradient id="i20" cx="35%" cy="30%" r="80%"><stop offset="0" stop-color="#bfe6ff"/><stop offset="0.45" stop-color="#2f8fe8"/><stop offset="1" stop-color="#1450b0"/></radialGradient></defs><circle cx="16.4" cy="6.9" r="6.8" fill="url(#i20)"/><path d="M11.3 5.2 q0.68 -3.74 4.08 -4.42 q0.34 2.38 -1.36 3.4 q-0.68 2.04 -2.72 1.02z" fill="#3cc028"/><path d="M19.46 3.5 q3.4 2.04 2.38 6.12 q-3.4 -1.36 -2.38 -6.12z" fill="#3cc028"/><defs><linearGradient id="i21" x1="0" y1="0" x2="1" y2="0.3"><stop offset="0" stop-color="#c96a48"/><stop offset="1" stop-color="#a84a2c"/></linearGradient></defs><path d="M0.4 6.4L15.9 8.5V22.5L0.4 19Z" fill="#8a5a4e"/><path d="M0.71 6.74 L5.26 7.36 L5.26 10.02 L0.71 9.30 Z" fill="url(#i21)"/><path d="M5.88 7.44 L10.42 8.06 L10.42 10.83 L5.88 10.12 Z" fill="url(#i21)"/><path d="M11.04 8.14 L15.59 8.76 L15.59 11.65 L11.04 10.93 Z" fill="url(#i21)"/><path d="M0.71 9.90 L2.67 10.21 L2.67 12.81 L0.71 12.46 Z" fill="url(#i21)"/><path d="M3.29 10.31 L7.84 11.03 L7.84 13.74 L3.29 12.92 Z" fill="url(#i21)"/><path d="M8.46 11.12 L13.01 11.84 L13.01 14.68 L8.46 13.86 Z" fill="url(#i21)"/><path d="M13.63 11.94 L15.59 12.25 L15.59 15.14 L13.63 14.79 Z" fill="url(#i21)"/><path d="M0.71 13.06 L5.26 13.88 L5.26 16.54 L0.71 15.61 Z" fill="url(#i21)"/><path d="M5.88 13.99 L10.42 14.81 L10.42 17.59 L5.88 16.66 Z" fill="url(#i21)"/><path d="M11.04 14.92 L15.59 15.74 L15.59 18.64 L11.04 17.71 Z" fill="url(#i21)"/><path d="M0.71 16.21 L2.67 16.61 L2.67 19.21 L0.71 18.77 Z" fill="url(#i21)"/><path d="M3.29 16.74 L7.84 17.66 L7.84 20.38 L3.29 19.35 Z" fill="url(#i21)"/><path d="M8.46 17.79 L13.01 18.71 L13.01 21.55 L8.46 20.52 Z" fill="url(#i21)"/><path d="M13.63 18.84 L15.59 19.24 L15.59 22.13 L13.63 21.69 Z" fill="url(#i21)"/><path d="M0.4 6.4L2.8 5.6L18.7 8L15.9 8.5Z" fill="#e09a78"/><path d="M15.9 8.5L18.7 8V21.2L15.9 22.5Z" fill="#8c3a20"/><path d="M15.9 12.00L18.7 11.30" stroke="#6a3020" stroke-width="0.5"/><path d="M15.9 15.50L18.7 14.60" stroke="#6a3020" stroke-width="0.5"/><path d="M15.9 19.00L18.7 17.90" stroke="#6a3020" stroke-width="0.5"/></svg>
<svg class="r" style="left:861px;top:742.3px;" width="16.5" height="12.5" viewBox="0 0 16.5 12.5"><rect x="3" y="0.6" width="12.6" height="8.6" fill="none" stroke="#fff" stroke-width="1.1"/><rect x="0.5" y="0.6" width="4.2" height="4" fill="#03050a" stroke="#fff" stroke-width="1"/><path d="M2.6 4.6V11.7H13.4M8.6 9.2V11.7" fill="none" stroke="#fff" stroke-width="1.1"/><rect x="2" y="2" width="1.2" height="1" fill="#fff"/></svg>
<svg class="r" style="left:884.5px;top:742.3px;" width="17" height="14" viewBox="0 0 17 14"><path d="M0.6 3.6H2.8L6.2 0.6V10.8L2.8 7.8H0.6Z" fill="none" stroke="#fff" stroke-width="1.1" stroke-linejoin="round"/><circle cx="11.9" cy="9" r="4.4" fill="#e81123"/><path d="M9.9 7L13.9 11M13.9 7L9.9 11" stroke="#fff" stroke-width="1.2"/></svg>
<svg class="r" style="left:983px;top:740.2px;" width="24" height="24" viewBox="0 0 24 24"><path d="M0 0H16V11H8.5L5.2 14V11H0Z" fill="#fff"/><rect x="2.8" y="2.6" width="10.4" height="1.1" fill="#03050a"/><rect x="2.8" y="5.2" width="10.4" height="1.1" fill="#03050a"/><rect x="2.8" y="7.8" width="10.4" height="1.1" fill="#03050a"/><circle cx="15.3" cy="15" r="7.6" fill="#3c3c3c" stroke="#8a8a8a" stroke-width="1.2"/><text x="15.3" y="19" font-family="Liberation Sans, sans-serif" font-weight="bold" font-size="11" fill="#fff" text-anchor="middle">1</text></svg>
<div class="r" style="left:163px;top:156px;width:714px;height:572px;background:#ffffff;border:1px solid #6e6e6e;border-bottom:none;"></div>
<div class="r" style="left:164px;top:247px;width:712px;height:1px;background:#f0f0f0;"></div>
<div class="r" style="left:331px;top:250px;width:545px;height:477px;background:#f0f0f0;"></div>
<span class="t" style="left:193.40px;top:165.84px;font-size:12px;line-height:12px;color:#000;letter-spacing:-0.016px;">Průvodce vytvořením nového příchozího pravidla</span>
<svg class="r" style="left:855.2px;top:165.2px;" width="11" height="11" viewBox="0 0 11 11"><path d="M0.7 0.7L10.3 10.3M10.3 0.7L0.7 10.3" stroke="#000" stroke-width="1.2" fill="none"/></svg>
<span class="t" style="left:171.60px;top:195.17px;font-size:13.5px;line-height:13.5px;color:#000;font-weight:bold;transform:scaleX(1.075);transform-origin:0 0;">Akce</span>
<span class="t" style="left:170.90px;top:221.69px;font-size:11px;line-height:11px;color:#000;letter-spacing:-0.102px;transform:scaleY(1.09);transform-origin:0 9.31px;">Určete, jaká akce má být provedena v případě, že připojení odpovídá podmínkám stanoveným pravidlem.</span>
<div class="r" style="left:164px;top:250px;width:165px;height:478px;background:#ffffff;border:1px solid #f0f0f0;border-left:none;border-bottom:none;"></div>
<div class="r" style="left:164px;top:251px;width:164px;height:22px;background:linear-gradient(#ffffff,#ebebeb);"></div>
<div class="r" style="left:165px;top:321px;width:163px;height:23px;background:#f0f0f0;"></div>
<span class="t" style="left:170.60px;top:257.09px;font-size:11px;line-height:11px;color:#000;letter-spacing:-0.523px;font-weight:bold;transform:scaleY(1.09);transform-origin:0 9.31px;">Kroky:</span>
<span class="t" style="left:186.30px;top:281.69px;font-size:11px;line-height:11px;color:#0066cc;letter-spacing:-0.192px;transform:scaleY(1.09);transform-origin:0 9.31px;">Typ pravidla</span>
<svg class="r" style="left:167.6px;top:282.8px;" width="9" height="9" viewBox="0 0 9 9"><defs><radialGradient id="g0" cx="32%" cy="28%" r="70%"><stop offset="0" stop-color="#e4f4dc"/><stop offset="0.35" stop-color="#7ad85a"/><stop offset="0.6" stop-color="#4cc830"/><stop offset="1" stop-color="#3db828"/></radialGradient></defs><circle cx="4.5" cy="4.5" r="4.2" fill="url(#g0)"/></svg>
<span class="t" style="left:186.30px;top:304.69px;font-size:11px;line-height:11px;color:#0066cc;letter-spacing:-0.208px;transform:scaleY(1.09);transform-origin:0 9.31px;">Protokol a porty</span>
<svg class="r" style="left:167.6px;top:305.8px;" width="9" height="9" viewBox="0 0 9 9"><defs><radialGradient id="g1" cx="32%" cy="28%" r="70%"><stop offset="0" stop-color="#e4f4dc"/><stop offset="0.35" stop-color="#7ad85a"/><stop offset="0.6" stop-color="#4cc830"/><stop offset="1" stop-color="#3db828"/></radialGradient></defs><circle cx="4.5" cy="4.5" r="4.2" fill="url(#g1)"/></svg>
<span class="t" style="left:186.30px;top:327.69px;font-size:11px;line-height:11px;color:#000;letter-spacing:-0.064px;transform:scaleY(1.09);transform-origin:0 9.31px;">Akce</span>
<svg class="r" style="left:167.6px;top:328.8px;" width="9" height="9" viewBox="0 0 9 9"><defs><radialGradient id="g2" cx="32%" cy="28%" r="70%"><stop offset="0" stop-color="#e4f4dc"/><stop offset="0.35" stop-color="#7ad85a"/><stop offset="0.6" stop-color="#4cc830"/><stop offset="1" stop-color="#3db828"/></radialGradient></defs><circle cx="4.5" cy="4.5" r="4.2" fill="url(#g2)"/></svg>
<span class="t" style="left:186.30px;top:350.69px;font-size:11px;line-height:11px;color:#0066cc;letter-spacing:-0.477px;transform:scaleY(1.09);transform-origin:0 9.31px;">Profil</span>
<svg class="r" style="left:167.6px;top:351.8px;" width="9" height="9" viewBox="0 0 9 9"><defs><radialGradient id="g3" cx="32%" cy="28%" r="70%"><stop offset="0" stop-color="#e4f4dc"/><stop offset="0.35" stop-color="#7ad85a"/><stop offset="0.6" stop-color="#4cc830"/><stop offset="1" stop-color="#3db828"/></radialGradient></defs><circle cx="4.5" cy="4.5" r="4.2" fill="url(#g3)"/></svg>
<span class="t" style="left:186.30px;top:373.69px;font-size:11px;line-height:11px;color:#0066cc;letter-spacing:-0.196px;transform:scaleY(1.09);transform-origin:0 9.31px;">Název</span>
<svg class="r" style="left:167.6px;top:374.8px;" width="9" height="9" viewBox="0 0 9 9"><defs><radialGradient id="g4" cx="32%" cy="28%" r="70%"><stop offset="0" stop-color="#e4f4dc"/><stop offset="0.35" stop-color="#7ad85a"/><stop offset="0.6" stop-color="#4cc830"/><stop offset="1" stop-color="#3db828"/></radialGradient></defs><circle cx="4.5" cy="4.5" r="4.2" fill="url(#g4)"/></svg>
<span class="t" style="left:368.00px;top:276.69px;font-size:11px;line-height:11px;color:#000;letter-spacing:-0.152px;transform:scaleY(1.09);transform-origin:0 9.31px;">Kterou akci lze provést, splňuje-li připojení zadané podmínky?</span>
<svg class="r" style="left:365px;top:315px;" width="13" height="13" viewBox="0 0 13 13"><circle cx="6.5" cy="6.5" r="6.05" fill="#fff" stroke="#333" stroke-width="1.1"/><circle cx="6.5" cy="6.5" r="3.3" fill="#333"/></svg>
<span class="t" style="left:384.60px;top:315.84px;font-size:12px;line-height:12px;color:#000;letter-spacing:-0.082px;font-weight:bold;">Povolit připojení</span>
<span class="t" style="left:384.50px;top:334.69px;font-size:11px;line-height:11px;color:#000;letter-spacing:-0.139px;transform:scaleY(1.09);transform-origin:0 9.31px;">Budou zahrnuta připojení, která jsou chráněna protokolem IPsec, i připojení, která chráněna</span>
<span class="t" style="left:383.50px;top:347.69px;font-size:11px;line-height:11px;color:#000;letter-spacing:-0.253px;transform:scaleY(1.09);transform-origin:0 9.31px;">nejsou.</span>
<svg class="r" style="left:365px;top:374px;" width="13" height="13" viewBox="0 0 13 13"><circle cx="6.5" cy="6.5" r="6.05" fill="#fff" stroke="#333" stroke-width="1.1"/></svg>
<span class="t" style="left:384.60px;top:374.84px;font-size:12px;line-height:12px;color:#000;letter-spacing:0.047px;font-weight:bold;">Povolit připojení, je-li zabezpečené</span>
<span class="t" style="left:384.50px;top:393.69px;font-size:11px;line-height:11px;color:#000;letter-spacing:-0.110px;transform:scaleY(1.09);transform-origin:0 9.31px;">Budou zahrnuta pouze připojení, která byla ověřena pomocí protokolu IPsec. Připojení</span>
<span class="t" style="left:383.50px;top:406.69px;font-size:11px;line-height:11px;color:#000;letter-spacing:-0.081px;transform:scaleY(1.09);transform-origin:0 9.31px;">budou zabezpečena pomocí nastavení vlastností v protokolu IPsec a pravidel v uzlu</span>
<span class="t" style="left:383.50px;top:419.69px;font-size:11px;line-height:11px;color:#000;letter-spacing:-0.105px;transform:scaleY(1.09);transform-origin:0 9.31px;">pravidla zabezpečení připojení.</span>
<div class="r" style="left:385px;top:439px;width:73px;height:21px;background:#cccccc;border:1px solid #bfbfbf;"></div>
<span class="t" style="left:392.20px;top:443.69px;font-size:11px;line-height:11px;color:#a0a0a0;letter-spacing:-0.427px;transform:scaleY(1.09);transform-origin:0 9.31px;">Přizpůsobit...</span>
<svg class="r" style="left:365px;top:480px;" width="13" height="13" viewBox="0 0 13 13"><circle cx="6.5" cy="6.5" r="6.05" fill="#fff" stroke="#333" stroke-width="1.1"/></svg>
<span class="t" style="left:384.60px;top:480.84px;font-size:12px;line-height:12px;color:#000;letter-spacing:-0.043px;font-weight:bold;">Blokovat připojení</span>
<div class="r" style="left:603px;top:694px;width:83px;height:21px;background:#e1e1e1;border:1px solid #adadad;"></div>
<div class="r" style="left:691px;top:694px;width:73px;height:21px;background:#e1e1e1;border:2px solid #0078d7;"></div>
<div class="r" style="left:772px;top:694px;width:83px;height:21px;background:#e1e1e1;border:1px solid #adadad;"></div>
<span class="t" style="left:629.00px;top:700.09px;font-size:11px;line-height:11px;color:#000;letter-spacing:-0.248px;transform:scaleY(1.09);transform-origin:0 9.31px;">&lt; Zpět</span>
<span class="t" style="left:710.40px;top:700.09px;font-size:11px;line-height:11px;color:#000;letter-spacing:-0.135px;transform:scaleY(1.09);transform-origin:0 9.31px;">Další &gt;</span>
<span class="t" style="left:800.00px;top:700.09px;font-size:11px;line-height:11px;color:#000;letter-spacing:-0.383px;transform:scaleY(1.09);transform-origin:0 9.31px;">Zrušit</span>
<svg class="r" style="left:173px;top:163px;" width="16" height="16" viewBox="0 0 16 16"><defs><radialGradient id="i22" cx="35%" cy="30%" r="80%"><stop offset="0" stop-color="#bfe6ff"/><stop offset="0.45" stop-color="#2f8fe8"/><stop offset="1" stop-color="#1450b0"/></radialGradient></defs><circle cx="9.3" cy="5.6" r="5.4" fill="url(#i22)"/><path d="M5.25 4.25 q0.54 -2.97 3.24 -3.51 q0.27 1.89 -1.08 2.7 q-0.54 1.62 -2.16 0.81z" fill="#3cc028"/><path d="M11.73 2.9 q2.7 1.62 1.89 4.86 q-2.7 -1.08 -1.89 -4.86z" fill="#3cc028"/><defs><linearGradient id="i23" x1="0" y1="0" x2="0" y2="1"><stop offset="0" stop-color="#f09a78"/><stop offset="0.35" stop-color="#d9623d"/><stop offset="0.8" stop-color="#b8482a"/><stop offset="1" stop-color="#8a3018"/></linearGradient></defs><rect x="0" y="6" width="11" height="9" fill="#7c4438"/><rect x="0.30" y="6.25" width="3.07" height="2.50" fill="url(#i23)"/><rect x="3.97" y="6.25" width="3.07" height="2.50" fill="url(#i23)"/><rect x="7.64" y="6.25" width="3.06" height="2.50" fill="url(#i23)"/><rect x="0.30" y="9.25" width="1.23" height="2.50" fill="url(#i23)"/><rect x="2.13" y="9.25" width="3.07" height="2.50" fill="url(#i23)"/><rect x="5.80" y="9.25" width="3.07" height="2.50" fill="url(#i23)"/><rect x="9.48" y="9.25" width="1.22" height="2.50" fill="url(#i23)"/><rect x="0.30" y="12.25" width="3.07" height="2.50" fill="url(#i23)"/><rect x="3.97" y="12.25" width="3.07" height="2.50" fill="url(#i23)"/><rect x="7.64" y="12.25" width="3.06" height="2.50" fill="url(#i23)"/></svg>
</body></html>
